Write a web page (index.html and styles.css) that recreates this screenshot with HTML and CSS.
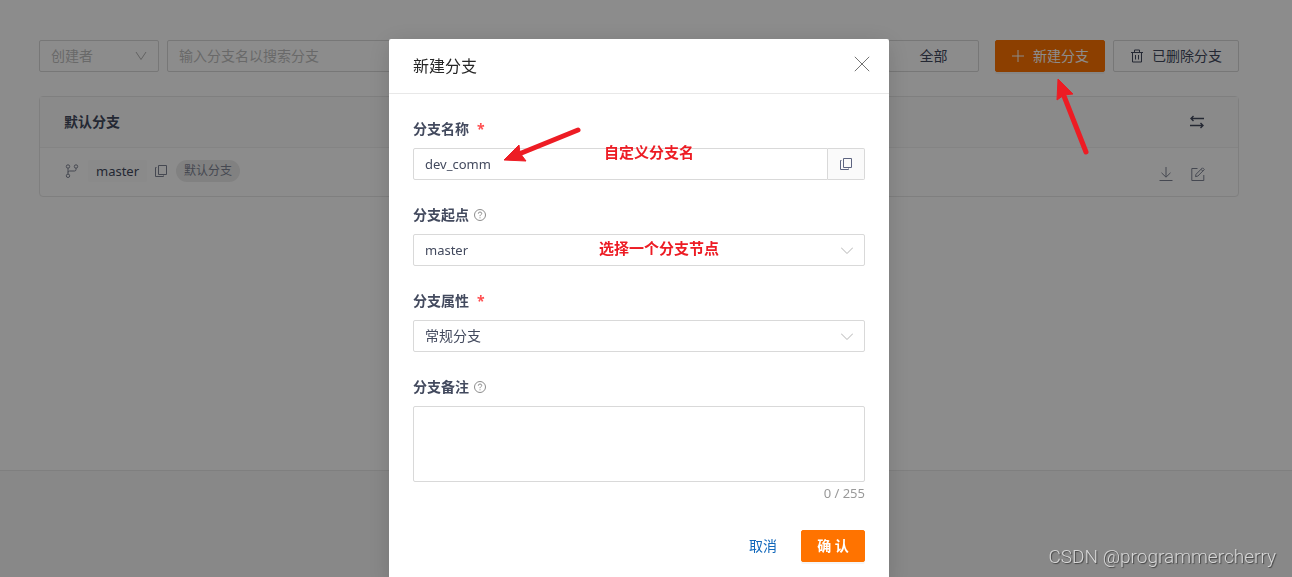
FILE: index.html
```html
<!DOCTYPE html>
<html lang="zh-CN">
<head>
<meta charset="utf-8">
<title>新建分支</title>
<link rel="stylesheet" href="styles.css">
</head>
<body>
<div class="page">
  <main class="content">
    <div class="toolbar">
      <div class="select-box creator">
        <select class="select placeholder" aria-label="创建者"><option>创建者</option></select>
        <svg class="chevron" viewBox="0 0 12 12"><path d="M1 2l5 7.500 5-7.500"/></svg>
      </div>
      <input class="search" type="text" placeholder="输入分支名以搜索分支" aria-label="搜索分支">
      <button class="btn scope" type="button">全部</button>
      <div class="actions">
        <button class="btn primary" type="button">
          <svg class="icon" viewBox="0 0 14 14"><path d="M7 1v12M1 7h12"/></svg>新建分支
        </button>
        <button class="btn deleted" type="button">
          <svg class="icon" viewBox="0 0 14 14"><path d="M1 3.500h12M4.500 3V1h5v2M2.500 3.500v9.500h9V3.500M5.500 6v4.500M8.500 6v4.500"/></svg>已删除分支
        </button>
      </div>
    </div>
    <section class="card">
      <header class="card-head">
        <h2 class="card-title">默认分支</h2>
        <button class="icon-btn dark" type="button" aria-label="切换">
          <svg class="icon" viewBox="0 0 14 14"><path d="M14 3.500H1M3.500 1L1 3.500 3.500 6M0 10.500H13M10.500 8l2.500 2.500-2.500 2.500"/></svg>
        </button>
      </header>
      <div class="card-row">
        <svg class="icon branch" viewBox="0 0 14 14"><circle cx="3" cy="2.500" r="1.700"/><circle cx="3" cy="11.800" r="1.700"/><circle cx="11" cy="2.500" r="1.700"/><path d="M3 4.200v5.900M11 4.200v1.300q0 1.500-1.500 1.500H4.500Q3 7 3 8.500"/></svg>
        <a class="branch-name latin" href="#">master</a>
        <button class="icon-btn copy" type="button" aria-label="复制">
          <svg class="icon" viewBox="0 0 14 14"><path d="M4.500 1.500h8v9h-8zM2.500 3.500h-1v9h8v-1"/></svg>
        </button>
        <span class="tag">默认分支</span>
        <div class="row-actions">
          <button class="icon-btn" type="button" aria-label="下载">
            <svg class="icon" viewBox="0 0 14 14"><path d="M7 0v10M2.500 5.800L7 10.200l4.500-4.400M.5 13.500h13"/></svg>
          </button>
          <button class="icon-btn" type="button" aria-label="编辑">
            <svg class="icon" viewBox="0 0 14 14"><path d="M6.500 1.500H.8v12h12V8M11.500.8l1.800 1.800-6.500 6.500-2.300.5.5-2.300zM10 2.300l1.800 1.800"/></svg>
          </button>
        </div>
      </div>
    </section>
  </main>
  <footer class="page-foot"></footer>
</div>

<div class="mask">
  <form class="modal" role="dialog" aria-labelledby="dialog-title">
    <header class="modal-head">
      <h1 class="modal-title" id="dialog-title">新建分支</h1>
      <button class="close" type="button" aria-label="关闭">
        <svg viewBox="0 0 16 16"><path d="M.8.8l14.400 14.400M15.200.8L.8 15.200"/></svg>
      </button>
    </header>
    <div class="modal-body">
      <div class="field">
        <label class="label" for="name">分支名称<span class="required">*</span></label>
        <div class="input-group">
          <input class="input latin" id="name" type="text" value="dev_comm">
          <button class="addon" type="button" aria-label="复制">
            <svg class="icon" viewBox="0 0 14 14"><path d="M4.500 1.500h8v9h-8zM2.500 3.500h-1v9h8v-1"/></svg>
          </button>
        </div>
      </div>
      <div class="field">
        <label class="label" for="source">分支起点<svg class="help" viewBox="0 0 12 12"><circle cx="6" cy="6" r="5.500"/><path d="M4.300 4.700q0-1.700 1.700-1.700t1.700 1.500q0 .9-1 1.400-.7.400-.7 1.300M6 8.300v1"/></svg></label>
        <div class="select-box">
          <select class="select latin" id="source"><option>master</option></select>
          <svg class="chevron" viewBox="0 0 12 12"><path d="M0 3.500l6 6 6-6"/></svg>
        </div>
      </div>
      <div class="field">
        <label class="label" for="kind">分支属性<span class="required">*</span></label>
        <div class="select-box">
          <select class="select" id="kind"><option>常规分支</option></select>
          <svg class="chevron" viewBox="0 0 12 12"><path d="M0 3.500l6 6 6-6"/></svg>
        </div>
      </div>
      <div class="field">
        <label class="label" for="note">分支备注<svg class="help" viewBox="0 0 12 12"><circle cx="6" cy="6" r="5.500"/><path d="M4.300 4.700q0-1.700 1.700-1.700t1.700 1.500q0 .9-1 1.400-.7.400-.7 1.300M6 8.300v1"/></svg></label>
        <textarea class="textarea" id="note"></textarea>
        <div class="counter latin">0 / 255</div>
      </div>
    </div>
    <footer class="modal-foot">
      <button class="btn link" type="button">取消</button>
      <button class="btn primary confirm" type="submit">确 认</button>
    </footer>
    <span class="note note-name">自定义分支名</span>
    <span class="note note-source">选择一个分支节点</span>
    <svg class="arrow arrow-name" viewBox="0 0 80 38"><path class="shaft" d="M76 5L17 29"/><path class="head" d="M2 35L17 20l1 8 6 8z"/></svg>
  </form>
</div>
<svg class="arrow arrow-new" viewBox="0 0 36 78"><path class="shaft" d="M31 74L9 18"/><path class="head" d="M3 1L18 16l-9 1-7 5z"/></svg>
<div class="watermark">CSDN @programmercherry</div>
</body>
</html>
```

FILE: styles.css
```css
* {
  box-sizing: border-box;
}

body {
  margin: 0;
  overflow: hidden;
  position: relative;
  font: 14px/22px "Noto Sans", "Noto Sans CJK SC", sans-serif;
  color: #434a5e;
}

button, input, select, textarea {
  font: inherit;
  color: inherit;
  margin: 0;
}

h1, h2 {
  margin: 0;
}

svg {
  display: block;
  flex: none;
  fill: none;
  stroke: currentColor;
}

.icon {
  width: 14px;
  height: 14px;
}

.latin {
  font-size: 13px;
}

/* Page behind the dialog */
.page {
  display: flex;
  flex-direction: column;
  min-height: 100vh;
  background: #fff;
}

.content {
  flex: 1;
  padding: 40px 53px 24px 39px;
}

.page-foot {
  height: 107px;
  background: #f8f8f8;
  border-top: 1px solid #e8e8e8;
}

.toolbar {
  display: flex;
  gap: 8px;
  margin-bottom: 24px;
}

.creator {
  width: 120px;
}

.search {
  flex: 1;
  min-width: 0;
  height: 32px;
  padding: 0 11px 2px;
  border: 1px solid #d9d9d9;
  border-radius: 2px;
  background: #fff;
}

.search::placeholder {
  color: #bfbfbf;
  opacity: 1;
}

.btn {
  display: flex;
  align-items: center;
  justify-content: center;
  gap: 8px;
  height: 32px;
  padding: 0 14px;
  border: 1px solid #d9d9d9;
  border-radius: 2px;
  background: #fff;
  white-space: nowrap;
}

.scope {
  width: 91px;
}

.toolbar .primary {
  padding: 0 15px;
}

.deleted {
  padding: 0 16px;
}

.actions {
  display: flex;
  gap: 8px;
  margin-left: 8px;
}

.primary {
  border-color: #ff7300;
  background: #ff7300;
  color: #fff;
  box-shadow: 0 2px 0 rgba(0, 0, 0, 0.04);
}

.card {
  border: 1px solid #e8e8e8;
  border-radius: 4px;
}

.card-head {
  display: flex;
  align-items: center;
  justify-content: space-between;
  height: 51px;
  padding: 0 34px 0 24px;
  border-bottom: 1px solid #f0f0f0;
  background: #fcfcfc;
}

.card-title {
  font-size: 14px;
  font-weight: 700;
}

.card-row {
  display: flex;
  align-items: center;
  height: 48px;
  padding: 0 33px 2px 25px;
}

.icon-btn {
  padding: 0;
  border: 0;
  background: none;
  color: #7f8494;
}

.dark {
  color: #434a5e;
}

.dark .icon {
  stroke-width: 1.4;
}

.branch {
  color: #7f8494;
}

.branch-name {
  margin: 0 7px 0 9px;
  padding: 0 8px;
  border-radius: 2px;
  background: #fcfcfc;
  color: inherit;
  text-decoration: none;
}

.tag {
  margin-left: 8px;
  padding: 0 8px;
  border-radius: 11px;
  background: #ebebeb;
  color: #7f8494;
  font-size: 12px;
}

.row-actions {
  display: flex;
  gap: 18px;
  margin: 6px 0 0 auto;
}

/* Form controls */
.select-box {
  display: grid;
  align-items: center;
}

.select-box > * {
  grid-area: 1 / 1;
}

.select {
  width: 100%;
  height: 32px;
  padding: 0 32px 0 11px;
  border: 1px solid #d9d9d9;
  border-radius: 2px;
  background: #fff;
  appearance: none;
}

.placeholder {
  color: #bfbfbf;
}

.chevron {
  width: 12px;
  height: 12px;
  margin-right: 12px;
  justify-self: end;
  color: #b3b3b3;
  pointer-events: none;
}

/* Dialog */
.mask {
  position: fixed;
  inset: 0;
  padding: 39px 14px 24px 0;
  overflow: hidden;
  background: rgba(0, 0, 0, 0.45);
}

.modal {
  position: relative;
  max-width: 500px;
  margin: 0 auto;
  border-radius: 2px;
  background: #fff;
  box-shadow: 0 4px 24px rgba(0, 0, 0, 0.15);
}

.modal-head {
  display: flex;
  align-items: center;
  justify-content: space-between;
  padding: 16px 19px 15px 24px;
  border-bottom: 1px solid #e8e8e8;
}

.modal-title {
  font-size: 16px;
  line-height: 23px;
  font-weight: 400;
  color: #262626;
}

.close {
  padding: 0;
  border: 0;
  margin-bottom: 5px;
  background: none;
  color: #737373;
}

.close svg {
  width: 16px;
  height: 16px;
}

.modal-body {
  display: flex;
  flex-direction: column;
  gap: 24px;
  padding: 24px 24px 0;
}

.field {
  display: flex;
  flex-direction: column;
}

.label {
  display: flex;
  align-items: center;
  margin-bottom: 8px;
  font-weight: 700;
}

.required {
  margin-left: 8px;
  color: #ff4d4f;
}

.help {
  width: 12px;
  height: 12px;
  margin-left: 5px;
  color: #8c8c8c;
}

.input-group {
  display: flex;
}

.input {
  flex: 1;
  min-width: 0;
  height: 32px;
  padding: 0 11px;
  border: 1px solid #d9d9d9;
  border-radius: 2px 0 0 2px;
}

.addon {
  display: flex;
  align-items: center;
  justify-content: center;
  width: 37px;
  padding: 0;
  border: 1px solid #d9d9d9;
  border-left: 0;
  border-radius: 0 2px 2px 0;
  background: #fafafa;
  color: #5d6480;
}

.textarea {
  display: block;
  height: 76px;
  padding: 4px 11px;
  border: 1px solid #d9d9d9;
  border-radius: 2px;
  resize: none;
}

.counter {
  text-align: right;
  color: #999;
}

.modal-foot {
  display: flex;
  justify-content: flex-end;
  gap: 8px;
  padding: 26px 24px 24px;
}

.link {
  padding: 0 15px;
  border-color: transparent;
  background: none;
  color: #1268bb;
}

.confirm {
  width: 64px;
  font-weight: 700;
}

/* Annotations drawn over the dialog */
.note {
  position: absolute;
  font-size: 15px;
  font-weight: 700;
  color: #ed1c24;
  pointer-events: none;
}

.note-name {
  top: 102px;
  left: 215px;
}

.note-source {
  top: 198px;
  left: 210px;
}

.arrow {
  position: absolute;
  pointer-events: none;
}

.arrow-name {
  top: 86px;
  left: 113px;
  width: 80px;
  height: 38px;
}

.arrow-new {
  top: 78px;
  right: 201px;
  width: 36px;
  height: 78px;
}

.shaft {
  stroke: #ed1c24;
  stroke-width: 5;
  stroke-linecap: round;
}

.head {
  fill: #ed1c24;
  stroke: #ed1c24;
}

.watermark {
  position: fixed;
  right: 16px;
  bottom: 8px;
  font: 19px/24px Roboto, sans-serif;
  color: #d6d6d6;
  font-weight: 300;
  text-shadow: 1px 1px 1px #444;
}
```
